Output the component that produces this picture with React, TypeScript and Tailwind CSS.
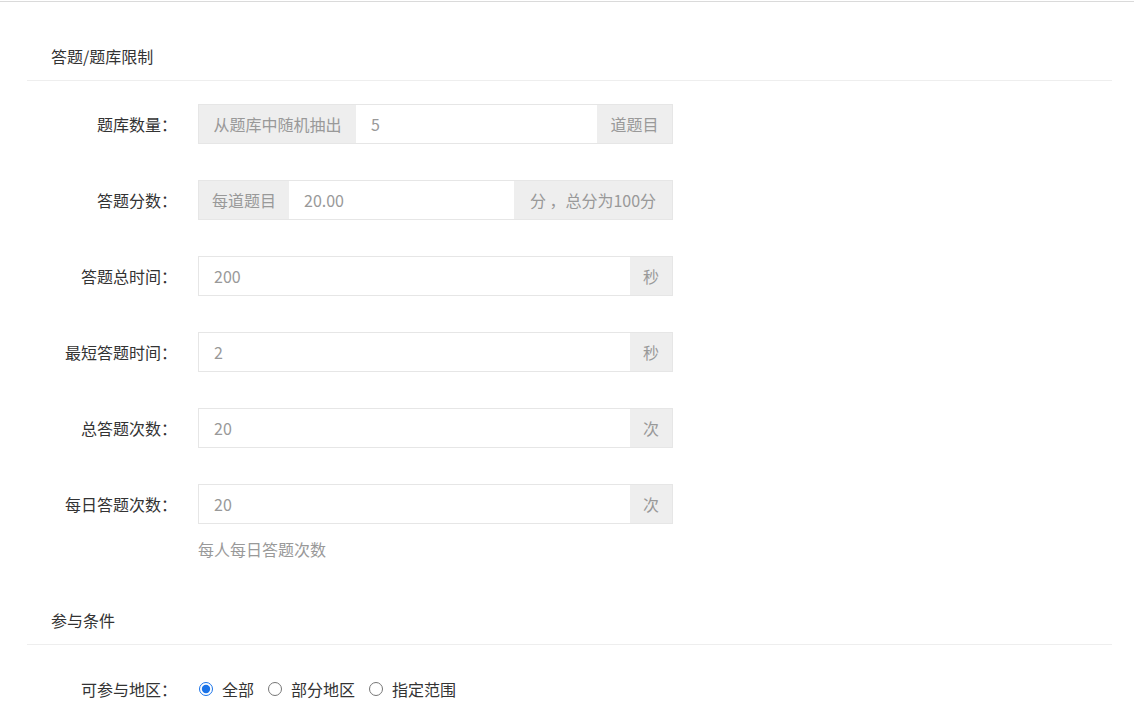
import React from "react";

const font = { fontFamily: '"Noto Sans CJK SC", "Noto Sans", sans-serif' };

function Row({ label, children }: { label: string; children: React.ReactNode }) {
  return (
    <div className="flex items-center h-[40px]">
      <div className="w-[150px] text-right text-[16px] text-[#333] leading-[24px] whitespace-nowrap">{label}</div>
      <div className="ml-[21px] w-[475px] h-[40px] flex border border-[#e6e6e6] text-[16px]">{children}</div>
    </div>
  );
}

function Addon({ text, w }: { text: string; w: string }) {
  return (
    <div className={`${w} shrink-0 h-full bg-[#eeeeee] text-[#999] flex items-center justify-center whitespace-nowrap`}>
      {text}
    </div>
  );
}

function Value({ v }: { v: string }) {
  return <div className="flex-1 h-full bg-white flex items-center pl-[15px] text-[#999]">{v}</div>;
}

function Radio({ label, checked }: { label: string; checked?: boolean }) {
  return (
    <label className="flex items-center mr-[14px]">
      <input type="radio" name="area" defaultChecked={checked} className="m-0 w-[14px] h-[14px] accent-[#1a73e8]" />
      <span className="ml-[9px] text-[16px] text-[#333]">{label}</span>
    </label>
  );
}

export default function App() {
  return (
    <div className="w-[1134px] min-h-[725px] bg-white" style={font}>
      <div className="h-px bg-white" />
      <div className="h-px bg-[#dadada]" />
      <div className="pl-[27px] pr-[22px]">
        <div className="pt-[42px] pb-[12px] pl-[24px] border-b border-[#eeeeee] text-[16px] leading-[24px] text-[#333]">
          答题/题库限制
        </div>
        <div className="mt-[23px] flex flex-col gap-[36px]">
          <Row label="题库数量：">
            <Addon text="从题库中随机抽出" w="w-[157px]" />
            <Value v="5" />
            <Addon text="道题目" w="w-[75px]" />
          </Row>
          <Row label="答题分数：">
            <Addon text="每道题目" w="w-[90px]" />
            <Value v="20.00" />
            <Addon text="分 ，总分为100分" w="w-[158px]" />
          </Row>
          <Row label="答题总时间：">
            <Value v="200" />
            <Addon text="秒" w="w-[42px]" />
          </Row>
          <Row label="最短答题时间：">
            <Value v="2" />
            <Addon text="秒" w="w-[42px]" />
          </Row>
          <Row label="总答题次数：">
            <Value v="20" />
            <Addon text="次" w="w-[42px]" />
          </Row>
          <Row label="每日答题次数：">
            <Value v="20" />
            <Addon text="次" w="w-[42px]" />
          </Row>
        </div>
        <div className="mt-[13px] ml-[171px] text-[16px] leading-[24px] text-[#999]">每人每日答题次数</div>
        <div className="pt-[47px] pb-[12px] pl-[24px] border-b border-[#eeeeee] text-[16px] leading-[24px] text-[#333]">
          参与条件
        </div>
        <div className="mt-[24px] flex items-center h-[40px]">
          <div className="w-[150px] text-right text-[16px] text-[#333] leading-[24px]">可参与地区：</div>
          <div className="ml-[22px] flex items-center">
            <Radio label="全部" checked />
            <Radio label="部分地区" />
            <Radio label="指定范围" />
          </div>
        </div>
      </div>
    </div>
  );
}
